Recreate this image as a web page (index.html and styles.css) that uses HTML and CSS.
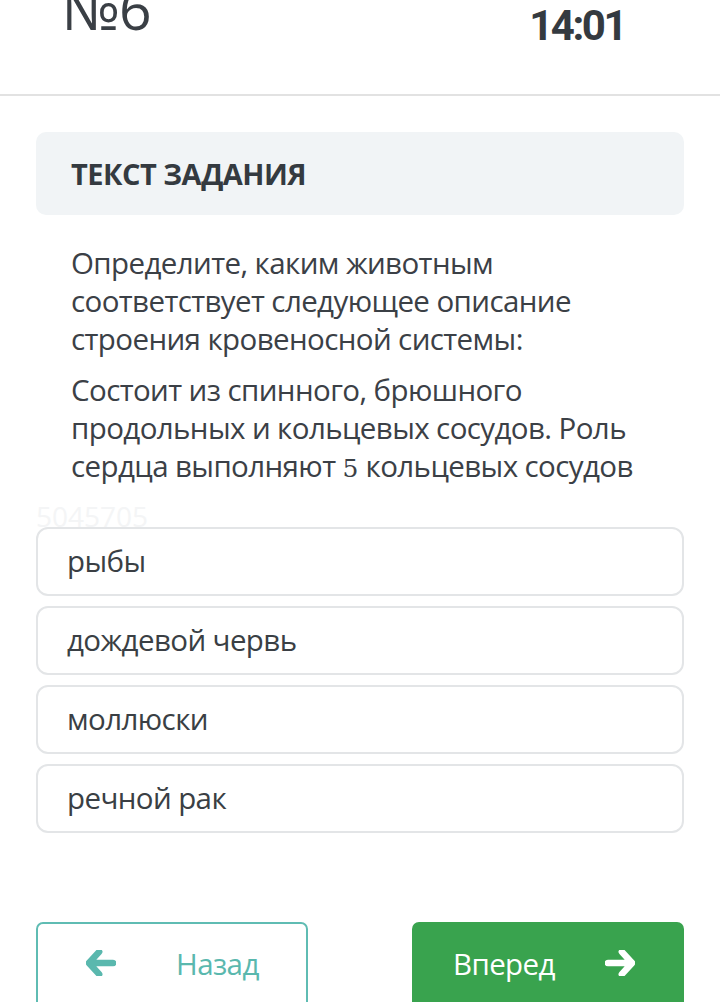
FILE: index.html
```html
<!DOCTYPE html>
<html lang="ru">
<head>
<meta charset="utf-8">
<link rel="stylesheet" href="styles.css">
</head>
<body>
<header class="top">
  <div class="num">№6</div>
  <div class="time">14:01</div>
</header>
<main class="content">
  <section class="task-head">ТЕКСТ ЗАДАНИЯ</section>
  <div class="question">
    <p>Определите, каким животным соответствует следующее описание строения кровеносной системы:</p>
    <p>Состоит из спинного, брюшного продольных и кольцевых сосудов. Роль сердца выполняют <span class="digit">5</span> кольцевых сосудов</p>
  </div>
  <div class="mark">5045705</div>
  <ul class="options">
    <li class="option">рыбы</li>
    <li class="option">дождевой червь</li>
    <li class="option">моллюски</li>
    <li class="option">речной рак</li>
  </ul>
  <nav class="nav">
    <button class="btn back">
      <svg class="arrow" viewBox="0 0 32 28" width="30" height="26"><path d="M14 2 L3 14 L14 26 M4 14 H29" fill="none" stroke="currentColor" stroke-width="7" stroke-linecap="round" stroke-linejoin="round"/></svg>
      <span>Назад</span>
    </button>
    <button class="btn next">
      <span>Вперед</span>
      <svg class="arrow" viewBox="0 0 32 28" width="30" height="26"><path d="M18 2 L29 14 L18 26 M28 14 H3" fill="none" stroke="currentColor" stroke-width="7" stroke-linecap="round" stroke-linejoin="round"/></svg>
    </button>
  </nav>
</main>
</body>
</html>
```
FILE: styles.css
```css
* { box-sizing: border-box; }
html, body { margin: 0; padding: 0; background: #fff; }
body {
  font-family: "Open Sans", "Noto Sans", sans-serif;
  color: #3b4046;
  width: 720px;
  height: 1002px;
  overflow: hidden;
}
.top {
  height: 96px;
  border-bottom: 2px solid #e2e2e2;
  display: flex;
  justify-content: space-between;
  padding: 0 95px 0 62px;
}
.num {
  font-size: 57px;
  line-height: 1;
  margin-top: -20px;
  font-weight: 400;
  color: #3a3f45;
  letter-spacing: -1px;
}
.time {
  font-size: 42px;
  font-weight: 700;
  margin-top: 4px;
  line-height: 44px;
  color: #343a40;
  font-family: "Roboto", sans-serif;
  letter-spacing: -2.5px;
}
.content { padding: 36px 36px 0; }
.task-head {
  background: #f1f4f6;
  border-radius: 10px;
  height: 83px;
  display: flex;
  align-items: center;
  padding-left: 35px;
  font-size: 29px;
  font-weight: 700;
  color: #343a40;
  letter-spacing: -0.5px;
}
.question { padding: 29px 35px 0; }
.question p {
  margin: 0 0 13px;
  font-size: 29.5px;
  line-height: 38px;
  letter-spacing: -0.6px;
}
.digit { font-family: "DejaVu Serif", serif; font-size: 25px; letter-spacing: 0; }
.mark {
  font-size: 28px;
  line-height: 30px;
  color: #f4f5f6;
  height: 26px;
}
.options { list-style: none; margin: 0; padding: 0; display: flex; flex-direction: column; gap: 10px; }
.option {
  border: 2px solid #e3e5e7;
  border-radius: 12px;
  height: 69px;
  display: flex;
  align-items: center;
  padding-left: 29px;
  padding-bottom: 2px;
  font-size: 29.5px;
  letter-spacing: -0.6px;
  color: #3a3f44;
}
.nav { display: flex; justify-content: space-between; margin-top: 89px; }
.btn {
  width: 272px;
  height: 90px;
  border-radius: 7px;
  font-family: "Open Sans", sans-serif;
  font-size: 29.5px;
  letter-spacing: -0.6px;
  display: flex;
  align-items: center;
  padding: 0 0 8px;
}
.back {
  background: #fff;
  border: 2px solid #5fbcb3;
  color: #5ab8ae;
  padding-left: 48px;
  gap: 60px;
}
.next {
  background: #39a34e;
  border: none;
  color: #fff;
  padding-left: 41px;
  gap: 50px;
}
.arrow { flex: none; }
```
